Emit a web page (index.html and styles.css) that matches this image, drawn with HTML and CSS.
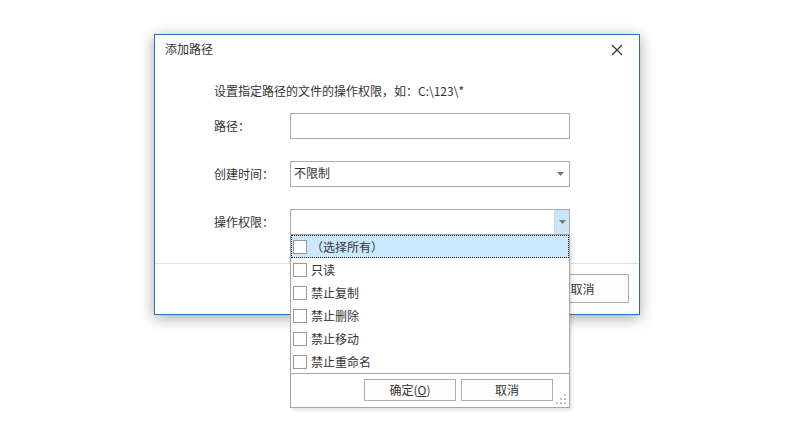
FILE: index.html
```html
<!DOCTYPE html>
<html lang="zh-CN">
<head>
    <meta charset="UTF-8">
    <title>添加路径</title>
    <link rel="stylesheet" href="styles.css">
</head>
<body>
    <div class="dialog">
        <!-- 标题栏 -->
        <div class="titlebar">
            <span class="title">添加路径</span>
            <span class="close">
                <svg width="12" height="12" viewBox="0 0 12 12"><path d="M1 1L11 11M11 1L1 11" stroke="#333" stroke-width="1.2" fill="none"/></svg>
            </span>
        </div>

        <!-- 表单内容 -->
        <div class="content">
            <p class="hint">设置指定路径的文件的操作权限，如：C:\123\*</p>
            <div class="form">
                <span class="label">路径：</span>
                <span class="field"></span>

                <span class="label">创建时间：</span>
                <span class="field select">
                    <span class="value">不限制</span>
                    <span class="arrow"><svg width="7" height="4" viewBox="0 0 7 4"><path d="M0 0H7L3.5 4Z" fill="#777"/></svg></span>
                </span>

                <span class="label">操作权限：</span>
                <span class="field select open">
                    <span class="value"></span>
                    <span class="arrow"><svg width="7" height="4" viewBox="0 0 7 4"><path d="M0 0H7L3.5 4Z" fill="#777"/></svg></span>

                    <!-- 下拉多选列表 -->
                    <div class="dropdown">
                        <ul class="options">
                            <li class="option active"><i class="check"></i>（选择所有）</li>
                            <li class="option"><i class="check"></i>只读</li>
                            <li class="option"><i class="check"></i>禁止复制</li>
                            <li class="option"><i class="check"></i>禁止删除</li>
                            <li class="option"><i class="check"></i>禁止移动</li>
                            <li class="option"><i class="check"></i>禁止重命名</li>
                        </ul>
                        <div class="dropdown-footer">
                            <button class="btn small">确定(<u>O</u>)</button>
                            <button class="btn small">取消</button>
                        </div>
                        <svg class="grip" width="11" height="11" viewBox="0 0 11 11">
                            <rect x="8" y="0" width="2" height="2" fill="#c4c4c4"/>
                            <rect x="4" y="4" width="2" height="2" fill="#c4c4c4"/>
                            <rect x="8" y="4" width="2" height="2" fill="#c4c4c4"/>
                            <rect x="0" y="8" width="2" height="2" fill="#c4c4c4"/>
                            <rect x="4" y="8" width="2" height="2" fill="#c4c4c4"/>
                            <rect x="8" y="8" width="2" height="2" fill="#c4c4c4"/>
                        </svg>
                    </div>
                </span>
            </div>
        </div>

        <!-- 底部按钮 -->
        <div class="footer">
            <button class="btn">确定</button>
            <button class="btn">取消</button>
        </div>
    </div>
</body>
</html>
```

FILE: styles.css
```css
/* 基础样式 */
* {
    box-sizing: border-box;
    margin: 0;
    padding: 0;
}

body {
    min-height: 429px;
    padding: 34px 0 0 154px;
    background: #fff;
    font-family: "Noto Sans CJK SC", "Noto Sans", sans-serif;
    font-size: 12px;
    color: #333;
}

/* 对话框 */
.dialog {
    width: 486px;
    height: 281px;
    border: 1px solid #2f6fb4;
    background: #fff;
    box-shadow: 0 3px 14px rgba(0, 0, 0, 0.35);
    display: flex;
    flex-direction: column;
}

.titlebar {
    height: 28px;
    display: flex;
    align-items: center;
    justify-content: space-between;
    padding: 0 16px 0 10px;
}

.title {
    font-size: 12px;
    line-height: 16px;
}

.close {
    display: flex;
    margin-top: 2px;
}

.content {
    flex: 1;
    padding: 19px 0 0 59px;
}

.hint {
    line-height: 18px;
    margin-bottom: 13px;
}

/* 表单 */
.form {
    display: grid;
    grid-template-columns: 76px 280px;
    grid-auto-rows: 26px;
    row-gap: 22px;
    align-items: center;
}

.label {
    line-height: 18px;
}

.field {
    height: 26px;
    border: 1px solid #acacac;
    background: #fff;
    display: flex;
    align-items: center;
    position: relative;
}

.select .value {
    flex: 1;
    padding-left: 3px;
    line-height: 18px;
    margin-top: -3px;
}

.select .arrow {
    width: 15px;
    height: 100%;
    display: flex;
    align-items: center;
    justify-content: center;
    margin-right: 1px;
}

.select.open .arrow {
    background: #cce4f7;
    border-left: 1px solid #c4dcef;
    margin-right: 0;
}

/* 下拉列表 */
.dropdown {
    position: absolute;
    top: 24px;
    left: -1px;
    width: 280px;
    height: 174px;
    border: 1px solid #a6a6a6;
    background: #fff;
    box-shadow: 2px 2px 3px rgba(0, 0, 0, 0.12);
    z-index: 2;
}

.options {
    list-style: none;
}

.option {
    height: 23px;
    display: flex;
    align-items: center;
    padding-left: 1px;
    line-height: 16px;
    border: 1px solid transparent;
}

.option.active {
    background: #cce8ff;
    border: 1px dotted #222;
}

.check {
    width: 14px;
    height: 14px;
    border: 1px solid #999;
    background: #fff;
    margin-right: 4px;
}

.dropdown-footer {
    height: 34px;
    border-top: 1px solid #a6a6a6;
    display: flex;
    justify-content: flex-end;
    gap: 5px;
    padding: 5px 16px 0 0;
}

.grip {
    position: absolute;
    right: 2px;
    bottom: 2px;
}

/* 按钮 */
.btn {
    width: 93px;
    height: 29px;
    border: 1px solid #adadad;
    background: #fdfdfd;
    font-family: inherit;
    font-size: 12px;
    color: #333;
}

.btn.small {
    width: 92px;
    height: 22px;
    line-height: 14px;
}

.btn u {
    text-decoration: underline;
}

.footer {
    height: 51px;
    border-top: 1px solid #dfdfdf;
    display: flex;
    justify-content: flex-end;
    gap: 6px;
    padding: 10px 10px 0 0;
}
```
